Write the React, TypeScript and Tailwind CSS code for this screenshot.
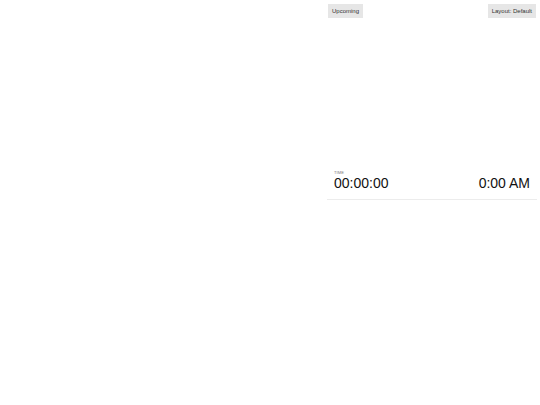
import React from "react";

export default function App() {
  return (
    <div className="w-[540px] h-[405px] bg-white flex" style={{ fontFamily: '"Liberation Sans", Arial, sans-serif' }}>
      <div className="flex-1" />
      <div className="w-[216px] h-[200px] flex flex-col">
        <div className="flex justify-between items-start p-1">
          <div className="h-[14px] px-[4px] bg-[#e6e6e6] text-[6px] text-[#333] flex items-center">Upcoming</div>
          <div className="h-[14px] px-[4px] bg-[#e6e6e6] text-[6px] text-[#333] flex items-center">Layout: Default</div>
        </div>
        <div className="flex-1" />
        <div className="mx-[3px] px-[7px] pb-[8px] border-b border-[#ececec] flex items-end justify-between">
          <div className="flex flex-col">
            <div className="text-[4px] leading-[5px] text-[#777] tracking-wide">TIME</div>
            <div className="text-[14px] leading-[16px] text-[#111]">00:00:00</div>
          </div>
          <div className="text-[14px] leading-[16px] text-[#111]">0:00 AM</div>
        </div>
      </div>
    </div>
  );
}
